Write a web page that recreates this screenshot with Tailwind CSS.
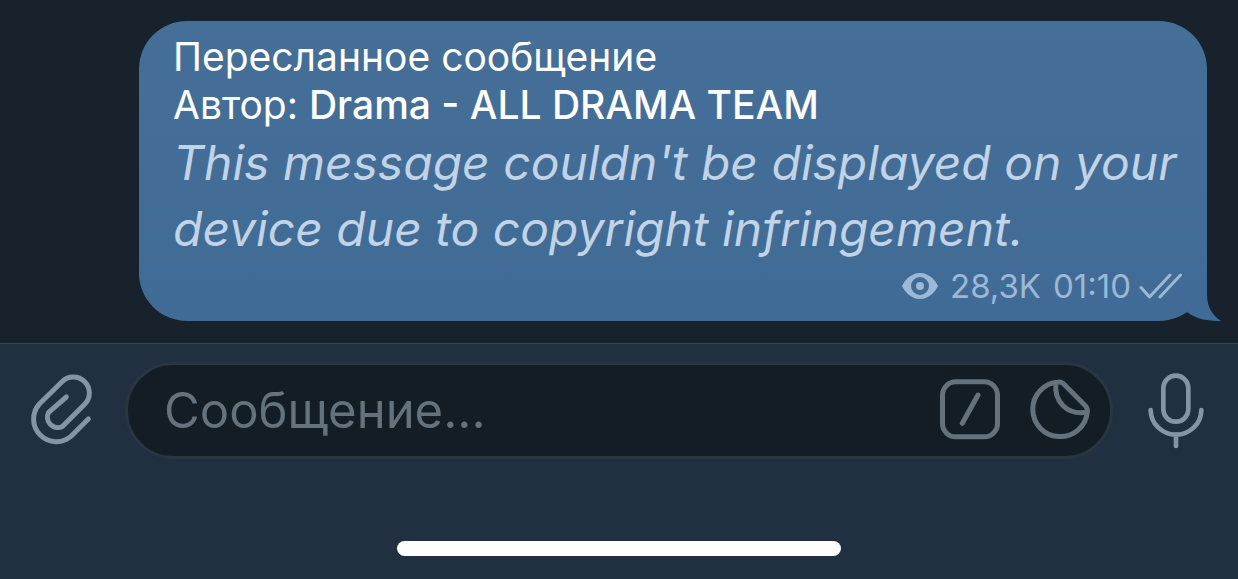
<!DOCTYPE html>
<html lang="ru">
<head>
    <meta charset="UTF-8">
    <meta name="viewport" content="width=device-width, initial-scale=1.0">
    <title>Чат</title>
    <script src="https://cdn.jsdelivr.net/npm/@tailwindcss/browser@4"></script>
</head>
<body class="flex min-h-screen flex-col bg-[#18222c] font-['Inter','Liberation_Sans',sans-serif]">

    <!-- Messages -->
    <main class="flex flex-1 flex-col justify-end pr-[31px] pb-[22px] pl-[139px]">
        <article class="relative rounded-[48px] bg-linear-to-b from-[#456f97] to-[#406b96] pt-3 pb-[11px]">
            <div class="px-[34px]">
                <header class="text-[39px] leading-[48px] text-white">
                    <p>Пересланное сообщение</p>
                    <p>Автор: <a href="#" class="font-medium">Drama - ALL DRAMA TEAM</a></p>
                </header>
                <p class="pt-px text-[48px] leading-[66px] whitespace-nowrap text-[#c1d3e6] italic">This message couldn't be displayed on your<br>device due to copyright infringement.</p>
            </div>
            <footer class="flex items-center justify-end gap-2 pr-[25px] text-[33px] leading-[48px] text-[#9bb9d7]">
                <svg class="mr-1 h-[26px] w-[36px]" viewBox="0 0 36 26" fill="none" aria-hidden="true">
                    <path fill="currentColor" fill-rule="evenodd" d="M18 0C28 0 34 8.500 36 13C34 17.500 28 26 18 26S2 17.500 0 13C2 8.500 8 0 18 0ZM18 4A9 9 0 0 0 18 22A9 9 0 0 0 18 4Z"/>
                    <circle cx="18" cy="13" r="4" fill="currentColor"/>
                </svg>
                <span class="mr-1">28,3K</span>
                <time>01:10</time>
                <svg class="h-[26px] w-[43px]" viewBox="0 0 43 26" fill="none" stroke="currentColor" stroke-width="3" stroke-linecap="round" stroke-linejoin="round" aria-hidden="true">
                    <path d="M2 14.500L10.500 24L31 2M21 24L41.500 2"/>
                </svg>
            </footer>
            <!-- Bubble tail -->
            <svg class="absolute -right-[14px] bottom-0 h-[48px] w-[34px]" viewBox="0 0 34 48" aria-hidden="true">
                <path fill="#406b96" d="M20 0V22C20 34 26 43 34 48C20 48 9 46 0 39Z"/>
            </svg>
        </article>
    </main>

    <!-- Composer -->
    <section class="border-t border-[#354554] bg-[#213040] pt-[18px] pb-[23px]">
        <form class="flex items-center">
            <button type="button" aria-label="Прикрепить" class="flex w-[125px] shrink-0 justify-center text-[#8595a6]">
                <svg class="size-[78px]" viewBox="74 63 234 234" fill="none" stroke="currentColor" stroke-width="15" stroke-linecap="round" stroke-linejoin="round">
                    <path d="M267 204L216 255A68 68 0 0 1 120 159L188 92A48 48 0 0 1 256 160L190 226A31 31 0 0 1 148 184L201 138"/>
                </svg>
            </button>
            <div class="flex h-[97px] min-w-0 flex-1 items-center gap-[26px] rounded-full border-3 border-[#293642] bg-[#131d25] pr-[18px] pl-9">
                <input type="text" aria-label="Сообщение" placeholder="Сообщение..." class="min-w-0 flex-1 bg-transparent text-[49px] leading-[66px] text-white outline-none placeholder:text-[#63727d]">
                <button type="button" aria-label="Команды" class="text-[#63727d]">
                    <svg class="size-16" viewBox="54 86 192 192" fill="none" stroke="currentColor" stroke-width="15" stroke-linecap="round">
                        <rect x="67.500" y="94.500" width="165" height="165" rx="40"/>
                        <path d="M174 134L127 219"/>
                    </svg>
                </button>
                <button type="button" aria-label="Стикеры" class="text-[#63727d]">
                    <svg class="size-16" viewBox="324 86 192 192" fill="none" stroke="currentColor" stroke-width="15" stroke-linecap="round" stroke-linejoin="round">
                        <path d="M415 95A82 82 0 1 0 502 184Q503 174 496 166L429 99Q423 94 415 95ZM408 98C401 151 439 195 500 186"/>
                    </svg>
                </button>
            </div>
            <button type="button" aria-label="Голосовое сообщение" class="flex w-[125px] shrink-0 justify-center text-[#8595a6]">
                <svg class="size-[78px]" viewBox="651 65 234 234" fill="none" stroke="currentColor" stroke-width="14" stroke-linecap="round">
                    <rect x="730" y="76" width="75" height="138" rx="37"/>
                    <path d="M692 179A76 74 0 0 0 844 179M768 253V287"/>
                </svg>
            </button>
        </form>
        <div class="mx-auto mt-[82px] h-[15px] w-[444px] rounded-full bg-white"></div>
    </section>

</body>
</html>
